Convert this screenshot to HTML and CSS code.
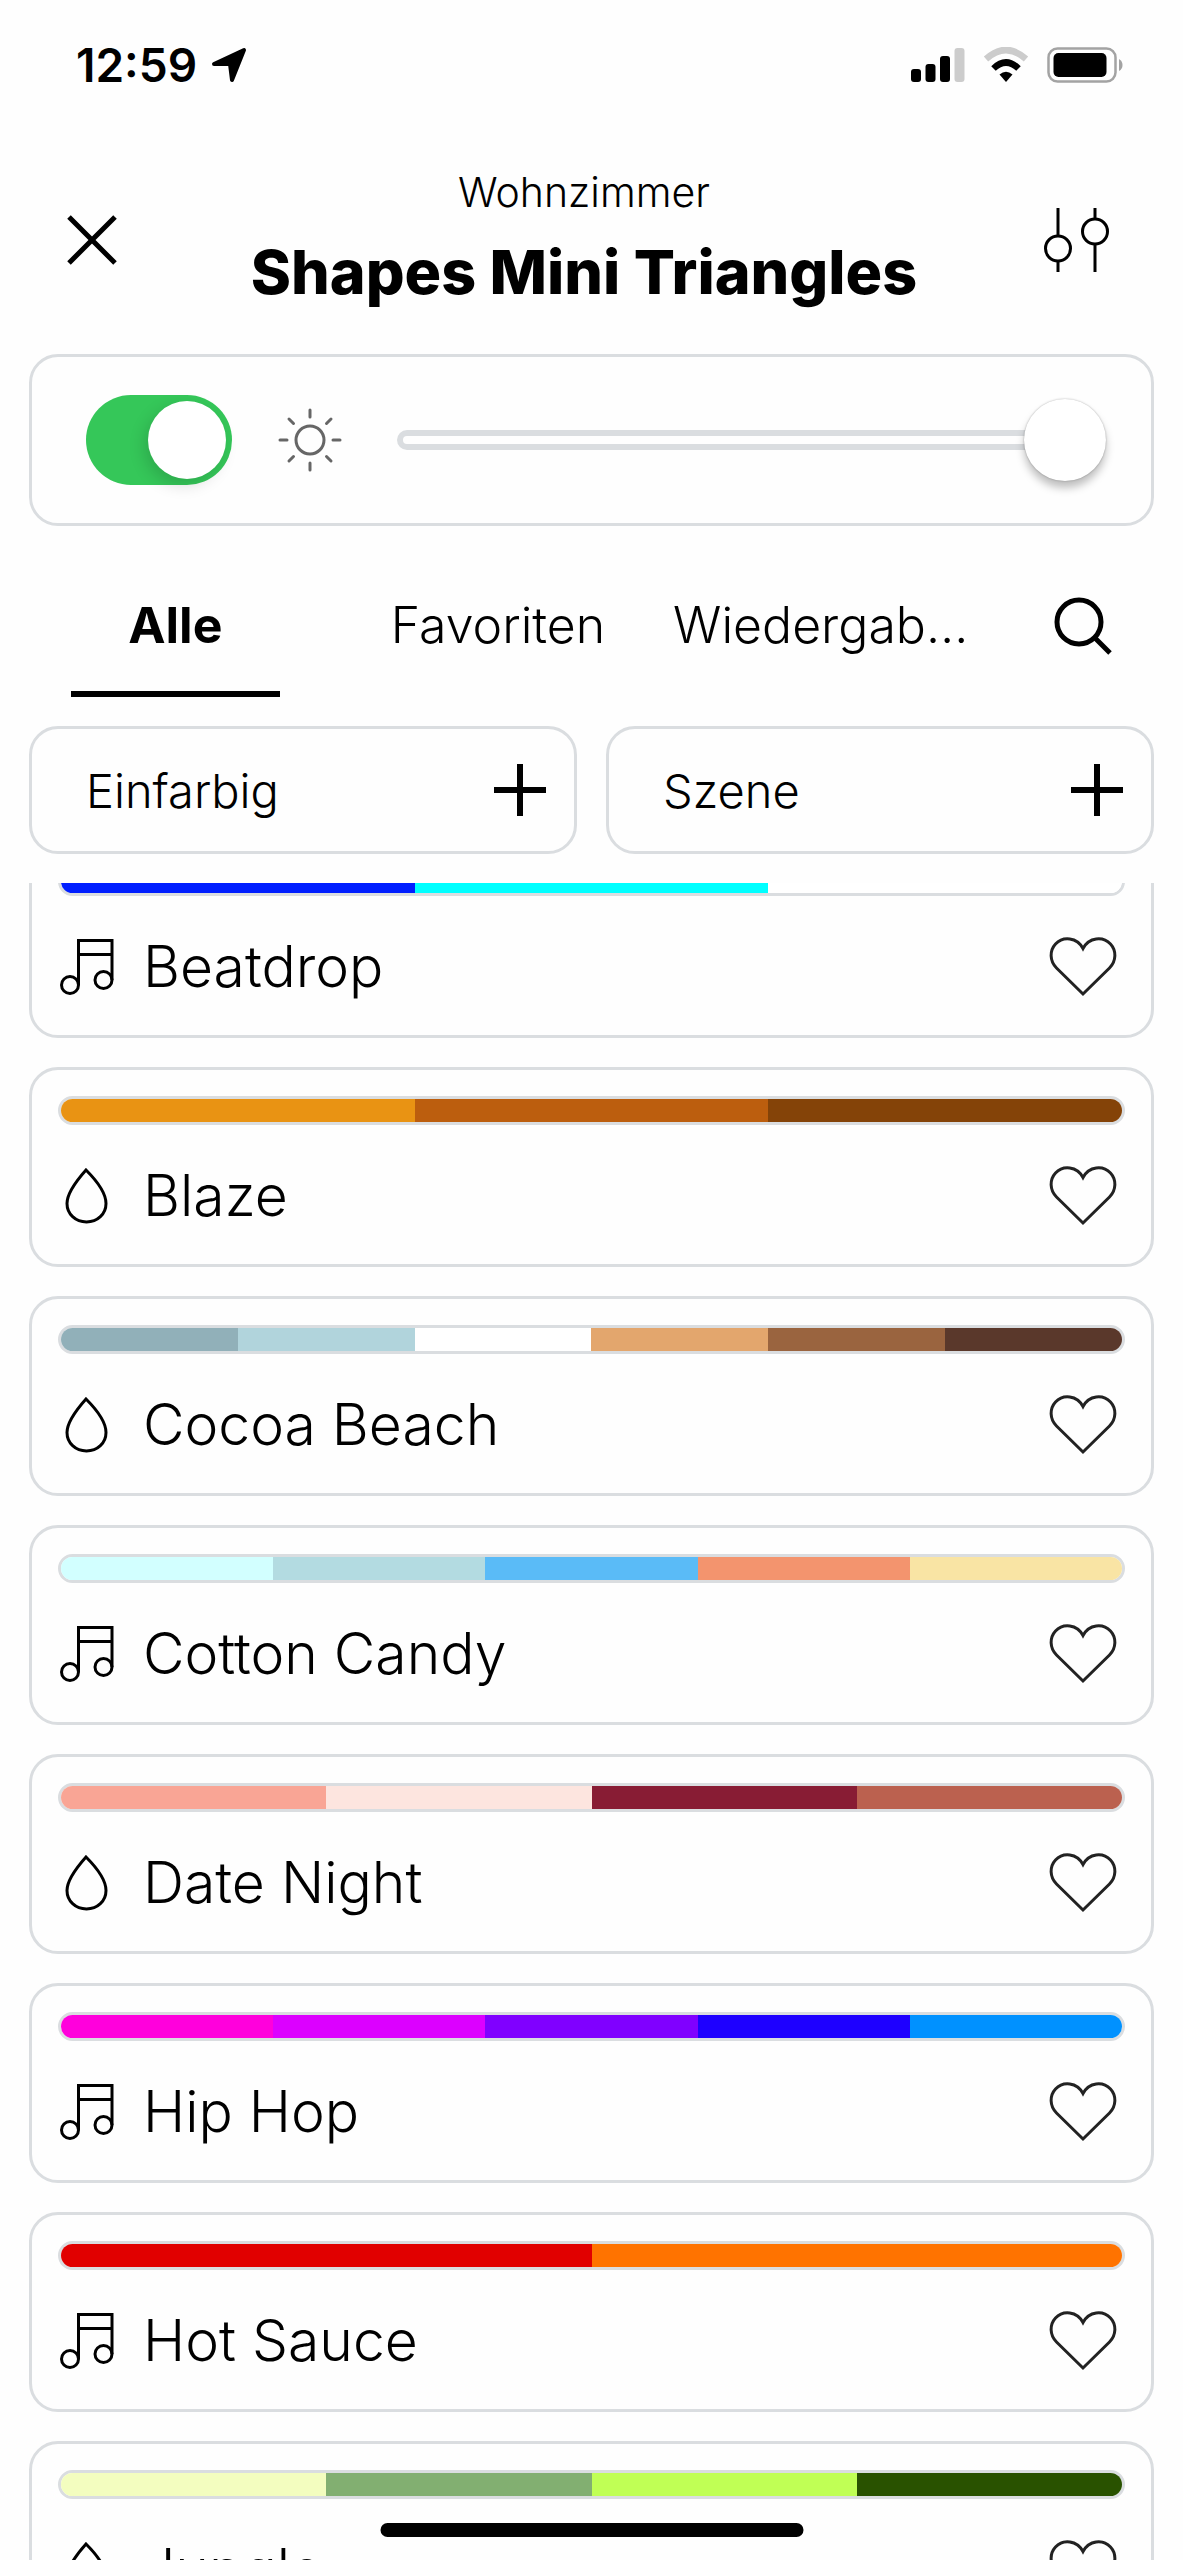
FILE: index.html
```
<!DOCTYPE html>
<html lang="de">

<head>
  <meta charset="UTF-8" />
  <meta name="viewport" content="width=device-width, initial-scale=1.0" />
  <title>Shapes Mini Triangles</title>
  <link rel="stylesheet" href="styles.css">
</head>

<body>
  <!-- icons -->
  <svg class="sprite" aria-hidden="true">
    <symbol id="music" viewBox="0 0 56 56">
      <path d="M20.500 46V1.500H54V41M20.500 15.500H54" />
      <ellipse cx="12" cy="46" rx="8.500" ry="8.500" />
      <ellipse cx="45.500" cy="41" rx="8.500" ry="8.500" />
    </symbol>
    <symbol id="drop" viewBox="0 0 56 56">
      <path d="M28 2C20 11 9 24 9 35.500C9 46 17.500 54 28.500 54C39.500 54 48 46 48 35.500C48 24 37 11 28 2Z" />
    </symbol>
    <symbol id="heart" viewBox="0 0 84 84">
      <path d="M42 69L15.500 43C8.500 36 8.500 25.500 14.500 19C22 11 36 12 42 23.500C48 12 62 11 69.500 19C75.500 25.500 75.500 36 68.500 43Z" />
    </symbol>
    <symbol id="plus" viewBox="0 0 56 56">
      <path d="M28 2V54M2 28H54" />
    </symbol>
  </svg>

  <div class="app">
    <div class="status">
      <span class="time">12:59</span>
      <svg class="location" viewBox="0 0 36 36">
        <path d="M33 3L21 33L19 17L3 17Z" />
      </svg>
      <div class="status-icons">
        <svg width="54" height="36" viewBox="0 0 54 36">
          <rect x="0" y="22" width="10" height="13" rx="3" />
          <rect x="14.500" y="17" width="10" height="18" rx="3" />
          <rect x="29" y="9" width="10" height="26" rx="3" />
          <rect x="43.500" y="1" width="10" height="34" rx="3" fill="#ccc" />
        </svg>
        <svg width="46" height="36" viewBox="0 0 46 36">
          <path d="M3 12Q23 -6 43 12" fill="none" stroke="#ccc" stroke-width="6.500" />
          <path d="M10.500 21.500Q23 9.500 35.500 21.500" fill="none" stroke="#000" stroke-width="6.500" />
          <path d="M16.500 27.500Q23 22 29.500 27.500L23 35Z" />
        </svg>
        <svg width="76" height="36" viewBox="0 0 76 36">
          <rect x="1.500" y="1.500" width="67" height="33" rx="9" fill="none" stroke="#a3a3a3" stroke-width="2.500" />
          <rect x="6.500" y="6" width="53" height="24" rx="5" />
          <path d="M72 12Q75.500 14 75.500 18Q75.500 22 72 24Z" fill="#a3a3a3" />
        </svg>
      </div>
    </div>

    <header class="header">
      <button class="icon-btn close" aria-label="Schließen">
        <svg viewBox="0 0 84 84"><path d="M19 19L65 65M65 19L19 65" /></svg>
      </button>
      <div class="heading">
        <p>Wohnzimmer</p>
        <h1>Shapes Mini Triangles</h1>
      </div>
      <button class="icon-btn settings" aria-label="Einstellungen">
        <svg viewBox="0 0 84 84">
          <path d="M24 10V38M24 63V74M61 10V21M61 46V74" />
          <circle cx="24" cy="50.500" r="12.500" />
          <circle cx="61" cy="33.500" r="12.500" />
        </svg>
      </button>
    </header>

    <section class="card brightness">
      <input class="switch" type="checkbox" role="switch" aria-label="Ein/Aus" checked>
      <svg class="sun" viewBox="0 0 64 64">
        <circle cx="32" cy="32" r="14" />
        <path d="M32 2V9M32 55V62M2 32H9M55 32H62M11 11L15.500 15.500M48.500 48.500L53 53M53 11L48.500 15.500M15.500 48.500L11 53" />
      </svg>
      <input class="range" type="range" aria-label="Helligkeit" min="0" max="100" value="100">
    </section>

    <nav class="tabs">
      <button class="tab active">Alle</button>
      <button class="tab">Favoriten</button>
      <button class="tab">Wiedergab…</button>
      <button class="icon-btn search" aria-label="Suchen">
        <svg viewBox="0 0 84 84">
          <circle cx="38" cy="38" r="22" />
          <path d="M54 54L69 69" />
        </svg>
      </button>
    </nav>

    <div class="actions">
      <button class="card add">Einfarbig<svg><use href="#plus" /></svg></button>
      <button class="card add">Szene<svg><use href="#plus" /></svg></button>
    </div>

    <main class="scenes">
      <ul>
        <li class="card scene">
          <div class="palette">
            <i style="background: #001eff"></i>
            <i style="background: #00ffff"></i>
            <i style="background: #ffffff"></i>
          </div>
          <div class="row">
            <svg class="type"><use href="#music" /></svg>
            <h2>Beatdrop</h2>
            <button class="icon-btn like" aria-label="Favorit"><svg><use href="#heart" /></svg></button>
          </div>
        </li>
        <li class="card scene">
          <div class="palette">
            <i style="background: #e99313"></i>
            <i style="background: #bc5e0e"></i>
            <i style="background: #844308"></i>
          </div>
          <div class="row">
            <svg class="type"><use href="#drop" /></svg>
            <h2>Blaze</h2>
            <button class="icon-btn like" aria-label="Favorit"><svg><use href="#heart" /></svg></button>
          </div>
        </li>
        <li class="card scene">
          <div class="palette">
            <i style="background: #91b0b9"></i>
            <i style="background: #b1d4dc"></i>
            <i style="background: #ffffff"></i>
            <i style="background: #e3a66d"></i>
            <i style="background: #9a643f"></i>
            <i style="background: #5a382b"></i>
          </div>
          <div class="row">
            <svg class="type"><use href="#drop" /></svg>
            <h2>Cocoa Beach</h2>
            <button class="icon-btn like" aria-label="Favorit"><svg><use href="#heart" /></svg></button>
          </div>
        </li>
        <li class="card scene">
          <div class="palette">
            <i style="background: #d2ffff"></i>
            <i style="background: #b3dbe1"></i>
            <i style="background: #5abbf7"></i>
            <i style="background: #f3946e"></i>
            <i style="background: #f9e4a4"></i>
          </div>
          <div class="row">
            <svg class="type"><use href="#music" /></svg>
            <h2>Cotton Candy</h2>
            <button class="icon-btn like" aria-label="Favorit"><svg><use href="#heart" /></svg></button>
          </div>
        </li>
        <li class="card scene">
          <div class="palette">
            <i style="background: #f9a595"></i>
            <i style="background: #fde5df"></i>
            <i style="background: #881c34"></i>
            <i style="background: #bb614f"></i>
          </div>
          <div class="row">
            <svg class="type"><use href="#drop" /></svg>
            <h2>Date Night</h2>
            <button class="icon-btn like" aria-label="Favorit"><svg><use href="#heart" /></svg></button>
          </div>
        </li>
        <li class="card scene">
          <div class="palette">
            <i style="background: #ff00dc"></i>
            <i style="background: #dc00ff"></i>
            <i style="background: #8000ff"></i>
            <i style="background: #1e00ff"></i>
            <i style="background: #0091ff"></i>
          </div>
          <div class="row">
            <svg class="type"><use href="#music" /></svg>
            <h2>Hip Hop</h2>
            <button class="icon-btn like" aria-label="Favorit"><svg><use href="#heart" /></svg></button>
          </div>
        </li>
        <li class="card scene">
          <div class="palette">
            <i style="background: #e10000"></i>
            <i style="background: #ff7300"></i>
          </div>
          <div class="row">
            <svg class="type"><use href="#music" /></svg>
            <h2>Hot Sauce</h2>
            <button class="icon-btn like" aria-label="Favorit"><svg><use href="#heart" /></svg></button>
          </div>
        </li>
        <li class="card scene">
          <div class="palette">
            <i style="background: #f3fdbf"></i>
            <i style="background: #82af71"></i>
            <i style="background: #c0ff55"></i>
            <i style="background: #295200"></i>
          </div>
          <div class="row">
            <svg class="type"><use href="#drop" /></svg>
            <h2>Jungle</h2>
            <button class="icon-btn like" aria-label="Favorit"><svg><use href="#heart" /></svg></button>
          </div>
        </li>
      </ul>
    </main>
  </div>
  <div class="home-indicator"></div>

  <script>
    document.querySelector('.scenes').scrollTop = 45
  </script>
</body>

</html>
```
FILE: styles.css
```
* {
  box-sizing: border-box;
}

body {
  margin: 0;
  background: #fefefe;
  color: #000;
  font-family: Inter, sans-serif;
  font-weight: 300;
}

button {
  margin: 0;
  padding: 0;
  border: none;
  background: none;
  color: inherit;
  font-family: inherit;
  font-weight: inherit;
  cursor: pointer;
}

svg {
  display: block;
  flex: none;
}

.sprite {
  position: absolute;
  width: 0;
  height: 0;
}

.app {
  display: flex;
  flex-direction: column;
  height: 100vh;
}

.card {
  border: 3px solid #dadde0;
  border-radius: 29px;
}

.icon-btn {
  flex: none;
  width: 84px;
  height: 84px;
}

.icon-btn svg {
  width: 84px;
  height: 84px;
  fill: none;
  stroke: #000;
}

/* status bar */
.status {
  display: flex;
  align-items: center;
  height: 130px;
  padding: 0 60px 0 76px;
}

.time {
  font-size: 46px;
  font-weight: 600;
  line-height: 56px;
}

.location {
  width: 36px;
  height: 36px;
  margin-left: 14px;
  stroke: #000;
  stroke-width: 4;
  stroke-linejoin: round;
}

.status-icons {
  display: flex;
  gap: 18px;
  margin-left: auto;
}

/* header */
.header {
  display: flex;
  align-items: center;
  padding: 30px 65px 34px 50px;
}

.heading {
  flex: 1;
  text-align: center;
}

.heading p {
  margin: 0;
  font-size: 41px;
  line-height: 64px;
}

.heading h1 {
  margin: 0;
  font-size: 61px;
  font-weight: 800;
  line-height: 96px;
}

.close svg,
.search svg {
  stroke-width: 5;
}

.settings svg {
  stroke-width: 3;
}

/* brightness */
.brightness {
  display: flex;
  align-items: center;
  height: 172px;
  margin: 0 29px;
  padding: 0 45px 0 54px;
}

.switch {
  appearance: none;
  flex: none;
  width: 146px;
  height: 90px;
  margin: 0;
  padding: 6px;
  border-radius: 45px;
  background: #d5d8db;
}

.switch::before {
  content: "";
  display: block;
  width: 78px;
  height: 78px;
  border-radius: 50%;
  background: #fff;
}

.switch:checked {
  background: #35c759;
}

.switch:checked::before {
  margin-left: auto;
  box-shadow: -4px 6px 16px rgba(0, 0, 0, 0.15);
}

.sun {
  width: 64px;
  height: 64px;
  margin: 0 55px 0 46px;
  fill: none;
  stroke: #666;
  stroke-width: 3;
  stroke-linecap: round;
}

.range {
  appearance: none;
  flex: 1;
  height: 82px;
  margin: 0;
  background: none;
}

.range::-webkit-slider-runnable-track {
  height: 20px;
  border-radius: 10px;
  box-shadow: inset 0 0 0 6px #dadde0;
}

.range::-webkit-slider-thumb {
  appearance: none;
  width: 82px;
  height: 82px;
  margin-top: -31px;
  border-radius: 50%;
  background: #fff;
  box-shadow: 0 0 2px rgba(0, 0, 0, 0.3), 0 7px 8px rgba(0, 0, 0, 0.25);
}

/* tabs */
.tabs {
  display: flex;
  align-items: center;
  padding: 0 58px 0 14px;
}

.tab {
  flex: 1;
  display: flex;
  flex-direction: column;
  align-items: center;
  height: 200px;
  font-size: 50px;
  line-height: 60px;
  padding-top: 69px;
}

.tab.active {
  font-weight: 700;
}

.tab.active::after {
  content: "";
  width: 209px;
  height: 6px;
  margin-top: 36px;
  background: #000;
}

.search {
  margin-left: 59px;
}

/* add buttons */
.actions {
  display: flex;
  gap: 29px;
  padding: 0 29px;
}

.add {
  flex: 1;
  display: flex;
  align-items: center;
  justify-content: space-between;
  height: 128px;
  padding: 0 26px 0 54px;
  font-size: 47px;
}

.add svg {
  width: 56px;
  height: 56px;
  stroke: #000;
  stroke-width: 6;
}

/* scenes */
.scenes {
  flex: 1;
  min-height: 0;
  margin-top: 29px;
  padding: 0 29px;
  overflow-y: auto;
  scrollbar-width: none;
}

.scenes ul {
  display: flex;
  flex-direction: column;
  gap: 29px;
  margin: 0;
  padding: 0;
  list-style: none;
}

.scene {
  padding: 26px;
}

.palette {
  display: flex;
  height: 29px;
  border: 3px solid #dadde0;
  border-radius: 15px;
  overflow: hidden;
}

.palette i {
  flex: 1;
}

.row {
  display: flex;
  align-items: center;
  height: 84px;
  margin-top: 29px;
}

.type {
  width: 56px;
  height: 56px;
  fill: none;
  stroke: #000;
  stroke-width: 3;
}

.row h2 {
  flex: 1;
  margin: 0 0 0 29px;
  font-size: 57px;
  font-weight: 300;
  line-height: 84px;
}

.like svg {
  stroke: #222;
  stroke-width: 3;
}

.home-indicator {
  position: fixed;
  bottom: 23px;
  left: 50%;
  width: 423px;
  height: 14px;
  border-radius: 7px;
  background: #000;
  transform: translateX(-50%);
}
```
